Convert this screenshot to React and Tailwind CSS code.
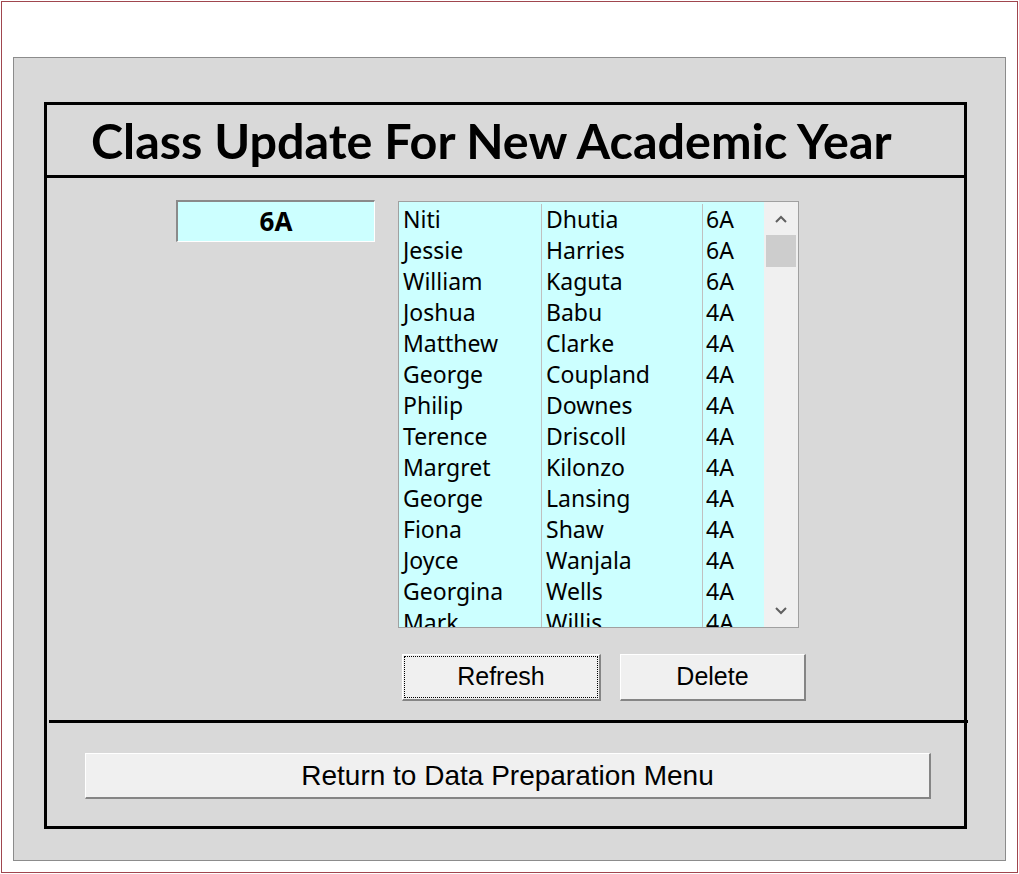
const students = [
  ['Niti', 'Dhutia', '6A'],
  ['Jessie', 'Harries', '6A'],
  ['William', 'Kaguta', '6A'],
  ['Joshua', 'Babu', '4A'],
  ['Matthew', 'Clarke', '4A'],
  ['George', 'Coupland', '4A'],
  ['Philip', 'Downes', '4A'],
  ['Terence', 'Driscoll', '4A'],
  ['Margret', 'Kilonzo', '4A'],
  ['George', 'Lansing', '4A'],
  ['Fiona', 'Shaw', '4A'],
  ['Joyce', 'Wanjala', '4A'],
  ['Georgina', 'Wells', '4A'],
  ['Mark', 'Willis', '4A'],
];

function Chevron({ up }) {
  return (
    <svg width="12" height="8" viewBox="0 0 12 8" className="text-[#606060]">
      <path d={up ? 'M1 7 L6 2 L11 7' : 'M1 1 L6 6 L11 1'} fill="none" stroke="currentColor" strokeWidth="2" />
    </svg>
  );
}

function ClassicButton({ children, focused, className }) {
  return (
    <button
      className={`relative bg-[#f0f0f0] border-t border-l border-white border-b-2 border-r-2 border-b-[#858585] border-r-[#858585] text-black ${className}`}
      style={{ fontFamily: '"Liberation Sans", Arial, sans-serif' }}
    >
      {focused && <span className="absolute inset-[1px] border border-dotted border-black pointer-events-none"></span>}
      {children}
    </button>
  );
}

export default function App() {
  return (
    <div className="w-[1019px] h-[874px] bg-white p-px">
      <div className="w-full h-full border border-[#a0464e] bg-white">
        <div className="ml-[11px] mt-[55px] w-[993px] h-[804px] border border-[#8c8c8c] bg-[#d9d9d9] pt-[44px] pl-[30px]">
          <div className="w-[923px] h-[727px] border-[3px] border-black flex flex-col">
            {/* title */}
            <div className="h-[73px] border-b-[3px] border-black flex items-center pl-[44px]">
              <h1 className="text-[48.5px] font-bold text-black leading-none" style={{ fontFamily: 'Lato, "Open Sans", sans-serif' }}>
                Class Update For New Academic Year
              </h1>
            </div>

            {/* main area */}
            <div className="h-[542px] flex pl-[129px] pt-[22px]">
              <div className="w-[199px] h-[42px] bg-[#ccffff] border-t-2 border-l-2 border-t-[#8a8a8a] border-l-[#8a8a8a] border-b border-r border-white flex items-center justify-center">
                <span className="text-[26px] font-bold text-black" style={{ fontFamily: '"Noto Sans", "DejaVu Sans", sans-serif' }}>6A</span>
              </div>

              <div className="ml-[23px] mt-px flex flex-col">
                <div className="w-[401px] h-[427px] border border-[#a0a0a0] flex overflow-hidden">
                  <div className="w-[365px] bg-[#ccffff] overflow-hidden pt-[2px]" style={{ fontFamily: '"Noto Sans", "DejaVu Sans", sans-serif' }}>
                    <div className="flex h-full">
                      <div className="w-[143px] border-r border-[#c0c0c0] pl-[4px]">
                        {students.map((s, i) => (
                          <div key={i} className="h-[31px] text-[23px] leading-[31px] text-black whitespace-nowrap">{s[0]}</div>
                        ))}
                      </div>
                      <div className="w-[161px] border-r border-[#c0c0c0] pl-[4px]">
                        {students.map((s, i) => (
                          <div key={i} className="h-[31px] text-[23px] leading-[31px] text-black whitespace-nowrap">{s[1]}</div>
                        ))}
                      </div>
                      <div className="flex-1 pl-[3px]">
                        {students.map((s, i) => (
                          <div key={i} className="h-[31px] text-[23px] leading-[31px] text-black whitespace-nowrap">{s[2]}</div>
                        ))}
                      </div>
                    </div>
                  </div>
                  <div className="flex-1 bg-[#f0f0f0] flex flex-col items-center">
                    <div className="h-[33px] flex items-center justify-center"><Chevron up /></div>
                    <div className="w-[30px] h-[32px] bg-[#cdcdcd]"></div>
                    <div className="flex-1"></div>
                    <div className="h-[33px] flex items-center justify-center"><Chevron /></div>
                  </div>
                </div>

                <div className="flex mt-[26px] pl-[4px] gap-[19px]">
                  <ClassicButton focused className="w-[199px] h-[47px] text-[25px]">Refresh</ClassicButton>
                  <ClassicButton className="w-[186px] h-[47px] text-[25px]">Delete</ClassicButton>
                </div>
              </div>
            </div>

            <div className="h-[3px] bg-black ml-[2px] mr-[-4px]"></div>

            {/* bottom */}
            <div className="flex-1 pl-[38px] pt-[30px]">
              <ClassicButton className="w-[846px] h-[46px] text-[28px]">Return to Data Preparation Menu</ClassicButton>
            </div>
          </div>
        </div>
      </div>
    </div>
  );
}
